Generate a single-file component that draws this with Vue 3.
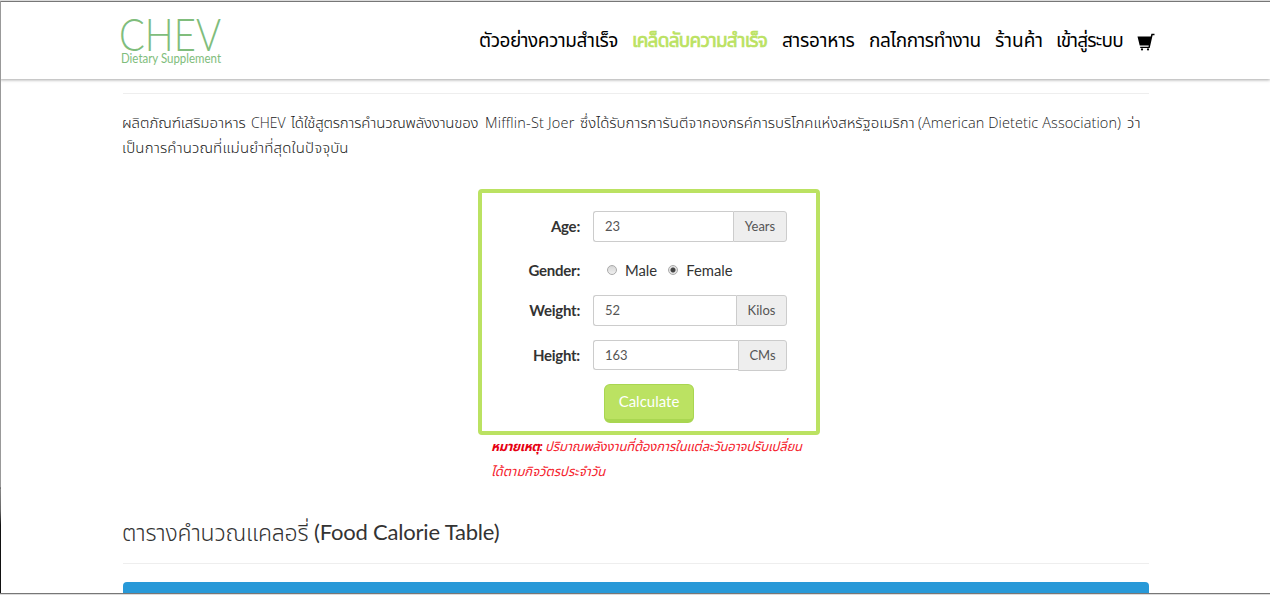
<template>
  <div class="window">
    <div class="edge"></div>
    <header class="navbar">
      <svg class="logo" width="104" height="60" viewBox="0 0 104 60">
        <text x="-1" y="42" class="logo-name" textLength="102" lengthAdjust="spacingAndGlyphs">CHEV</text>
        <text x="1" y="54" class="logo-sub" textLength="100" lengthAdjust="spacingAndGlyphs">Dietary Supplement</text>
      </svg>
      <nav class="menu">
        <a
          v-for="item in menu"
          :key="item.key"
          :class="['menu-item', item.key, { active: item.key === current }]"
        >{{ item.label }}</a>
        <svg class="cart" width="18" height="18" viewBox="0 0 18 18">
          <path d="M0.5 3.5H13.7L14.4 0.8H17.5V2.3H15.6L12.7 15H3.2V13.7H11.5L11.8 12.5H2.7Z" />
          <circle cx="5" cy="16.4" r="1.1" />
          <circle cx="11" cy="16.4" r="1.1" />
        </svg>
      </nav>
    </header>

    <main class="container">
      <hr />
      <div class="intro">
        <p>
          <span class="product">ผลิตภัณฑ์เสริมอาหาร</span>
          <span class="brand">CHEV</span>
          <span class="formula">ได้ใช้สูตรการคำนวณพลังงานของ</span>
          <span class="mifflin">Mifflin-St Joer</span>
          <span class="certified">ซึ่งได้รับการการันตีจากองกรค์การบริโภคแห่งสหรัฐอเมริกา</span>
          <span class="association">(American Dietetic Association)</span>
          <span>ว่า</span>
        </p>
        <p>เป็นการคำนวณที่แม่นยำที่สุดในปัจจุบัน</p>
      </div>

      <form class="calculator" @submit.prevent>
        <div class="form-row">
          <label for="age">Age:</label>
          <div class="input-group">
            <input id="age" v-model="age" type="text" />
            <span class="addon">Years</span>
          </div>
        </div>
        <div class="form-row gender-row">
          <label>Gender:</label>
          <div class="genders">
            <label v-for="g in genders" :key="g" class="gender">
              <input v-model="gender" type="radio" name="gender" :value="g" />
              {{ g }}
            </label>
          </div>
        </div>
        <div class="form-row weight-row">
          <label for="weight">Weight:</label>
          <div class="input-group">
            <input id="weight" v-model="weight" type="text" />
            <span class="addon">Kilos</span>
          </div>
        </div>
        <div class="form-row height-row">
          <label for="height">Height:</label>
          <div class="input-group">
            <input id="height" v-model="height" type="text" />
            <span class="addon">CMs</span>
          </div>
        </div>
        <button type="submit">Calculate</button>
      </form>
      <div class="note">
        <p><b>หมายเหตุ:</b><span class="note-first">ปริมาณพลังงานที่ต้องการในแต่ละวันอาจปรับเปลี่ยน</span></p>
        <p>ได้ตามกิจวัตรประจำวัน</p>
      </div>

      <h3><span class="title-th">ตารางคำนวณแคลอรี่</span><span class="title-en">(Food Calorie Table)</span></h3>
      <hr />
      <div class="table-head"></div>
    </main>
  </div>
</template>

<script setup>
import { ref } from 'vue';

const menu = [
  { key: 'success', label: 'ตัวอย่างความสำเร็จ' },
  { key: 'tips', label: 'เคล็ดลับความสำเร็จ' },
  { key: 'nutrients', label: 'สารอาหาร' },
  { key: 'mechanism', label: 'กลไกการทำงาน' },
  { key: 'shop', label: 'ร้านค้า' },
  { key: 'login', label: 'เข้าสู่ระบบ' },
];
const genders = ['Male', 'Female'];

const current = ref('tips');
const age = ref('23');
const gender = ref('Female');
const weight = ref('52');
const height = ref('163');
</script>

<style>
body {
  margin: 0;
  background: #fff;
}
</style>

<style scoped>
* {
  box-sizing: border-box;
}
.window {
  position: relative;
  width: 1270px;
  height: 595px;
  overflow: hidden;
  background: #fff;
  color: #333;
  font-family: Lato, "Noto Sans Thai", "Liberation Sans", sans-serif;
  border-top: 1px solid #dcdcdc;
}
.window::before,
.window::after {
  content: "";
  position: absolute;
  left: 0;
  right: 0;
  height: 1px;
  background: #777;
  z-index: 2;
}
.window::before {
  top: 0;
}
.window::after {
  bottom: 1px;
  box-shadow: 0 1px 0 #dcdcdc;
}
.edge {
  position: absolute;
  z-index: 3;
  left: 0;
  top: 0;
  width: 1px;
  height: 592px;
  background: linear-gradient(#999 0 486px, #555 487px, #888 488px, #666 510px, #111 524px);
}

.navbar {
  display: flex;
  justify-content: space-between;
  height: 78px;
  padding: 0 115px 0 120px;
  background: #fff;
  box-shadow: 0 1px 3px rgba(0, 0, 0, 0.35);
}
.logo {
  margin-top: 8px;
  overflow: visible;
  fill: #80bd7c;
}
.logo-name {
  font-family: Lato, sans-serif;
  font-size: 46px;
  font-weight: 300;
}
.logo-sub {
  font-family: Lato, sans-serif;
  font-size: 13px;
  font-weight: 400;
}
.menu {
  display: flex;
  align-items: flex-start;
  padding-top: 25px;
}
.menu-item {
  color: #000;
  font-size: 19px;
  line-height: 28px;
  white-space: nowrap;
  margin-right: 14px;
  letter-spacing: -0.45px;
}
.menu-item.success {
  width: 139px;
}
.menu-item.tips {
  width: 136px;
  letter-spacing: -0.75px;
}
.menu-item.nutrients {
  width: 73px;
  letter-spacing: -0.25px;
}
.menu-item.mechanism {
  width: 112px;
}
.menu-item.shop {
  width: 47px;
  letter-spacing: 0;
}
.menu-item.login {
  width: 67px;
  letter-spacing: -0.75px;
}
.menu-item.active {
  color: #bbe262;
  -webkit-text-stroke: 0.7px #bbe262;
}
.cart {
  margin-top: 7px;
}

.container {
  width: 1026px;
  margin: 0 0 0 123px;
}
hr {
  height: 1px;
  border: 0;
  margin: 0;
  background: #eee;
}
.container > hr:first-child {
  margin-top: 14px;
}
.intro {
  margin: 16px 0 0 -1px;
  height: 50px;
  color: #222;
  font-size: 15px;
  font-weight: 300;
  line-height: 25px;
  letter-spacing: 0.15px;
  white-space: nowrap;
}
p {
  margin: 0;
}
.intro p:first-child {
  display: flex;
}
.intro span {
  flex-shrink: 0;
}
.product {
  width: 129px;
  letter-spacing: -0.07px;
}
.brand {
  width: 40px;
  font-family: "Open Sans", sans-serif;
  font-size: 14px;
  letter-spacing: 0;
}
.formula {
  width: 194px;
  letter-spacing: -0.22px;
}
.mifflin {
  width: 95px;
  font-family: "Open Sans", sans-serif;
  font-size: 14.5px;
  letter-spacing: 0.2px;
}
.certified {
  width: 338px;
  letter-spacing: 0;
}
.association {
  width: 209px;
  font-family: "Open Sans", sans-serif;
  font-size: 14.5px;
  letter-spacing: 0.1px;
}

.calculator {
  width: 342px;
  height: 246px;
  margin: 29px 0 0 355px;
  padding-top: 18px;
  border: 4px solid #bbe262;
  border-radius: 4px;
}
.form-row {
  display: flex;
  align-items: center;
  height: 31px;
}
.form-row > label {
  width: 98px;
  margin: -2px 13px 0 0;
  text-align: right;
  font-size: 15px;
  font-weight: bold;
  letter-spacing: -0.25px;
}
.input-group {
  display: flex;
  width: 194px;
  height: 31px;
}
.input-group input {
  flex: 1;
  min-width: 0;
  padding: 0 11px 1px;
  border: 1px solid #ccc;
  border-right: 0;
  border-radius: 3px 0 0 3px;
  font-family: Lato, sans-serif;
  font-size: 13px;
  color: #555;
  outline: none;
}
.addon {
  width: 54px;
  border: 1px solid #ccc;
  border-radius: 0 3px 3px 0;
  background: #eee;
  color: #555;
  font-size: 13px;
  line-height: 29px;
  text-align: center;
}
.weight-row .addon {
  width: 51px;
}
.height-row .addon {
  width: 49px;
}
.gender-row {
  margin-top: 13px;
}
.genders {
  display: flex;
  gap: 11px;
  margin-top: -2px;
  padding-left: 14px;
  font-size: 14.8px;
}
.gender {
  display: flex;
  align-items: center;
}
.gender input {
  appearance: none;
  width: 10px;
  height: 10px;
  margin: 0 8px 0 0;
  border: 1px solid #aaa;
  border-radius: 50%;
  background: linear-gradient(#d6d6d6, #f0f0f0);
}
.gender input:checked {
  background: radial-gradient(circle, #444 0 2px, #e4e4e4 3px);
}
.weight-row {
  margin-top: 9px;
}
.height-row {
  margin-top: 14px;
}
.height-row input {
  height: 30px;
}
button {
  display: block;
  width: 90px;
  height: 39px;
  margin: 13px 0 0 122px;
  padding: 0 0 2px;
  border: 1px solid #a9d651;
  border-bottom-width: 4px;
  border-radius: 6px;
  background: #bbe262;
  color: #fff;
  font-family: Lato, sans-serif;
  font-size: 15px;
}
.note {
  margin: -1px 0 1px 368px;
  height: 50px;
  color: #f5222d;
  font-size: 13px;
  font-style: italic;
  line-height: 25px;
  white-space: nowrap;
}
.note p:first-child {
  display: flex;
}
.note b {
  width: 54px;
  color: #e60012;
  letter-spacing: -0.4px;
}
.note-first {
  letter-spacing: -0.16px;
}

h3 {
  display: flex;
  margin: 30px 0 0 -1px;
  height: 49px;
  color: #333;
  font-size: 23px;
  font-weight: 400;
  line-height: 36px;
  white-space: nowrap;
}
.title-th {
  width: 192px;
  font-weight: 300;
  letter-spacing: -0.2px;
}
.title-en {
  font-size: 22px;
  letter-spacing: -0.2px;
}
.table-head {
  height: 40px;
  margin-top: 18px;
  border-radius: 4px 4px 0 0;
  background: #2899d8;
}
</style>
